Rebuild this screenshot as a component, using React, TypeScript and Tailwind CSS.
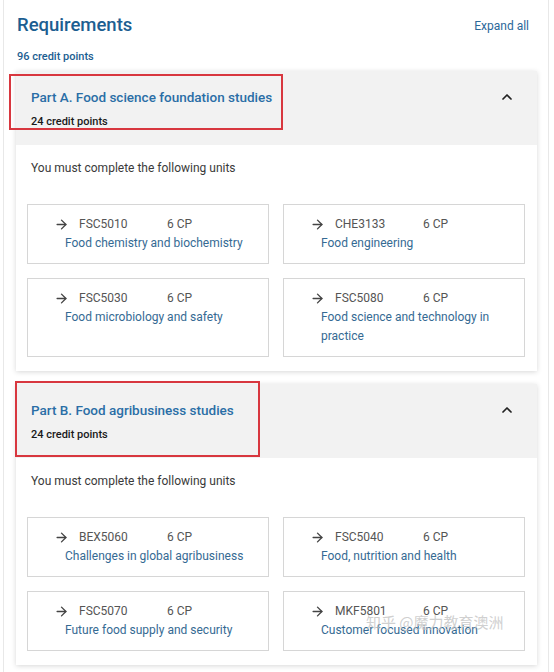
import React from "react";
import { ArrowRight, ChevronUp } from "lucide-react";

type Unit = { code: string; name: string };

const partA: Unit[] = [
  { code: "FSC5010", name: "Food chemistry and biochemistry" },
  { code: "CHE3133", name: "Food engineering" },
  { code: "FSC5030", name: "Food microbiology and safety" },
  { code: "FSC5080", name: "Food science and technology in practice" },
];

const partB: Unit[] = [
  { code: "BEX5060", name: "Challenges in global agribusiness" },
  { code: "FSC5040", name: "Food, nutrition and health" },
  { code: "FSC5070", name: "Future food supply and security" },
  { code: "MKF5801", name: "Customer focused innovation" },
];

function UnitCard({ u }: { u: Unit }) {
  return (
    <div className="border border-[#d6d6d6] bg-white pl-[26px] pr-3 pt-[10px] pb-[10px] text-[12px] leading-[19px]">
      <div className="flex items-center text-[#555]">
        <ArrowRight size={15} strokeWidth={2.2} className="text-[#444] mr-[10px]" />
        <span className="w-[88px]">{u.code}</span>
        <span>6 CP</span>
      </div>
      <div className="pl-[11px] text-[#356a93]">{u.name}</div>
    </div>
  );
}

function Part({ title, units, boxClass }: { title: string; units: Unit[]; boxClass: string }) {
  return (
    <div className="relative bg-white shadow-[0_1px_5px_rgba(0,0,0,0.16)]">
      <div className="bg-[#f2f2f2] pl-[15px] pr-[22px] pt-[16px] pb-[15px] flex items-start justify-between">
        <div>
          <div className="text-[13.5px] leading-[20px] font-medium text-[#2a6ea6]">{title}</div>
          <div className="mt-[7px] text-[11px] leading-[16px] font-medium text-[#1a1a1a]">24 credit points</div>
        </div>
        <ChevronUp size={16} strokeWidth={2.6} className="text-[#222] mt-[2px]" />
      </div>
      <div className="px-[11px] pt-[15px] pb-[14px]">
        <div className="pl-[4px] text-[12px] leading-[16px] text-[#3a3a3a]">You must complete the following units</div>
        <div className="mt-[28px] grid grid-cols-2 gap-x-[14px] gap-y-[14px] pr-[1px]">
          {units.map((u) => (
            <UnitCard key={u.code} u={u} />
          ))}
        </div>
      </div>
      <div className={"pointer-events-none absolute border-2 border-[#d8373f] " + boxClass} />
    </div>
  );
}

export default function App() {
  return (
    <div
      className="relative w-[554px] h-[672px] bg-white overflow-hidden"
      style={{ fontFamily: "Roboto, 'Noto Sans CJK SC', sans-serif" }}
    >
      <div className="ml-[3px] w-[546px] h-[672px] border-x border-[#e8e8e8] pl-[12px] pr-[11px]">
        <div className="flex items-start justify-between pt-[11px] pl-[1px]">
          <div className="text-[18.5px] leading-[28px] font-medium text-[#1c5e91]">Requirements</div>
          <div className="mt-[7px] mr-[8px] text-[12px] leading-[16px] text-[#2b6899]">Expand all</div>
        </div>
        <div className="mt-[10px] pl-[1px] text-[11px] leading-[16px] font-medium text-[#1c5e91]">96 credit points</div>
        <div className="mt-[6px] flex flex-col gap-[13px]">
          <Part
            title="Part A. Food science foundation studies"
            units={partA}
            boxClass="left-[-7px] top-[3px] w-[274px] h-[56px]"
          />
          <Part
            title="Part B. Food agribusiness studies"
            units={partB}
            boxClass="left-[-1px] top-[-3px] w-[245px] h-[76px]"
          />
        </div>
      </div>
      <div
        className="absolute left-[366px] top-[611px] text-[15px] leading-[22px] text-[#c4c4c4]/80"
        style={{ fontFamily: "'Noto Sans CJK SC', sans-serif" }}
      >
        知乎 @魔力教育澳洲
      </div>
    </div>
  );
}
